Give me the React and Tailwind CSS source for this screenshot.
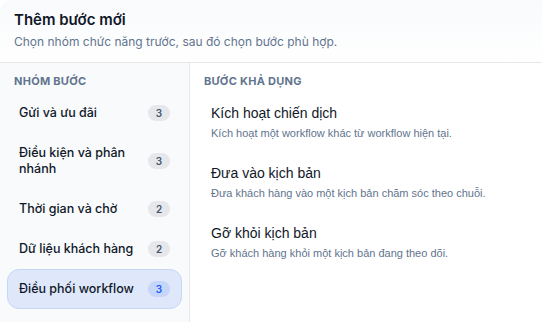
import React, { useState } from "react";

const groups = [
  { name: "Gửi và ưu đãi", count: 3 },
  { name: "Điều kiện và phân nhánh", count: 3 },
  { name: "Thời gian và chờ", count: 2 },
  { name: "Dữ liệu khách hàng", count: 2 },
  { name: "Điều phối workflow", count: 3 },
];

const steps = [
  { title: "Kích hoạt chiến dịch", desc: "Kích hoạt một workflow khác từ workflow hiện tại." },
  { title: "Đưa vào kịch bản", desc: "Đưa khách hàng vào một kịch bản chăm sóc theo chuỗi." },
  { title: "Gỡ khỏi kịch bản", desc: "Gỡ khách hàng khỏi một kịch bản đang theo dõi." },
];

const App = () => {
  const [active, setActive] = useState(4);

  return (
    <div className="h-[322px] w-full overflow-hidden bg-white font-['Inter',sans-serif]">
      <div className="flex h-full flex-col overflow-hidden rounded-tl-xl">
        {/* Header */}
        <div className="shrink-0 border-b border-gray-200 bg-gradient-to-b from-slate-50 to-white px-[14px] pt-[10px] pb-[12px]">
          <h2 className="text-[15px] leading-5 font-semibold text-gray-900">Thêm bước mới</h2>
          <p className="mt-1 text-[12px] leading-4 text-slate-500">
            Chọn nhóm chức năng trước, sau đó chọn bước phù hợp.
          </p>
        </div>

        <div className="flex min-h-0 flex-1">
          {/* Groups */}
          <div className="w-[190px] shrink-0 border-r border-gray-200 bg-slate-50 px-[7px] pt-[10px]">
            <div className="mb-[4px] px-[7px] text-[11px] leading-4 font-bold tracking-wide text-slate-500 uppercase">
              Nhóm bước
            </div>
            <div className="flex flex-col">
              {groups.map((g, i) => (
                <button
                  key={g.name}
                  onClick={() => setActive(i)}
                  className={`flex items-center justify-between gap-2 rounded-xl border px-[11px] py-[11px] text-left ${
                    active === i ? "border-[#c6d6f5] bg-[#dfe7fb]" : "border-transparent"
                  }`}
                >
                  <span className="text-[12.5px] leading-4 font-medium text-gray-900">{g.name}</span>
                  <span
                    className={`flex h-4 w-[22px] shrink-0 items-center justify-center rounded-full text-[10px] font-semibold ${
                      active === i ? "bg-[#c5d6fa] text-blue-600" : "bg-gray-200 text-slate-600"
                    }`}
                  >
                    {g.count}
                  </span>
                </button>
              ))}
            </div>
          </div>

          {/* Steps */}
          <div className="flex-1 px-[14px] pt-[10px]">
            <div className="mb-[4px] text-[11px] leading-4 font-bold tracking-wide text-slate-500 uppercase">
              Bước khả dụng
            </div>
            <div className="flex flex-col gap-[2px] font-['Liberation_Sans',Arial,sans-serif]">
              {steps.map((s) => (
                <button key={s.title} className="rounded-lg px-[7px] py-[10px] text-left hover:bg-slate-50">
                  <div className="text-[14px] leading-5 font-medium text-gray-900">{s.title}</div>
                  <div className="mt-[2px] text-[11px] leading-4 text-slate-500">{s.desc}</div>
                </button>
              ))}
            </div>
          </div>
        </div>
      </div>
    </div>
  );
};

export default App;
